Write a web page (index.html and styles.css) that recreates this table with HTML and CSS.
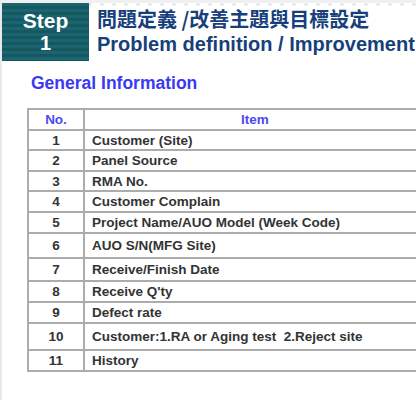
FILE: index.html
```html
<!DOCTYPE html>
<html lang="en">
<head>
    <meta charset="UTF-8">
    <meta name="viewport" content="width=device-width, initial-scale=1.0">
    <title>Step 1 - Problem definition</title>
    <link rel="stylesheet" href="styles.css">
</head>
<body>

<div class="page">
    <div class="header">
        <div class="step-box">
            <span>Step</span>
            <span>1</span>
        </div>
        <div class="titles">
            <div class="title-zh">問題定義 /改善主題與目標設定</div>
            <div class="title-en">Problem definition / Improvement</div>
        </div>
    </div>

    <h2>General Information</h2>

    <table class="info-table">
        <tr class="head">
            <th class="no">No.</th>
            <th>Item</th>
        </tr>
        <tr class="r20"><td class="no">1</td><td>Customer (Site)</td></tr>
        <tr class="r21"><td class="no">2</td><td>Panel Source</td></tr>
        <tr class="r20"><td class="no">3</td><td>RMA No.</td></tr>
        <tr class="r21"><td class="no">4</td><td>Customer Complain</td></tr>
        <tr class="r21"><td class="no">5</td><td>Project Name/AUO Model (Week Code)</td></tr>
        <tr class="r25"><td class="no">6</td><td>AUO S/N(MFG Site)</td></tr>
        <tr class="r23"><td class="no">7</td><td>Receive/Finish Date</td></tr>
        <tr class="r21"><td class="no">8</td><td>Receive Q'ty</td></tr>
        <tr class="r21"><td class="no">9</td><td>Defect rate</td></tr>
        <tr class="r27"><td class="no">10</td><td>Customer:1.RA or Aging test&nbsp; 2.Reject site</td></tr>
        <tr class="r21"><td class="no">11</td><td>History</td></tr>
    </table>
</div>

</body>
</html>
```

FILE: styles.css
```css
body {
    margin: 0;
    background-color: white;
    font-family: Arial, "Liberation Sans", sans-serif;
    overflow: hidden;
}
.page {
    width: 416px;
    height: 400px;
    border-left: 2px solid #e9e9e9;
    border-top: 3px solid #f0f0f0;
    box-sizing: border-box;
    overflow: hidden;
}
.header {
    display: flex;
    align-items: flex-start;
    background-image:
        radial-gradient(circle, rgba(200, 210, 220, 0.5) 1.5px, transparent 2px);
    background-size: 12px 11px;
    background-position: 250px -4px;
    background-repeat: repeat-x;
}
.step-box {
    flex-shrink: 0;
    width: 87px;
    height: 58px;
    display: flex;
    flex-direction: column;
    align-items: center;
    justify-content: center;
    color: white;
    font-weight: bold;
    font-size: 20px;
    line-height: 23px;
    background-color: #175f6c;
    background-image: repeating-linear-gradient(to bottom, #1b6573 0, #1b6573 3px, #15585f 3px, #15585f 6px);
}
.step-box span:first-child {
    font-size: 21px;
}
.titles {
    padding-left: 8px;
    color: #163f7c;
    white-space: nowrap;
}
.title-zh {
    font-family: "Noto Sans CJK TC", Arial, sans-serif;
    font-weight: bold;
    font-size: 20px;
    line-height: 26px;
    margin-top: 3px;
}
.title-en {
    font-weight: bold;
    font-size: 20px;
    line-height: 24px;
}
h2 {
    margin: 11px 0 0 29px;
    font-size: 17.5px;
    line-height: 22px;
    color: #3a3af2;
}
.info-table {
    margin: 14px 0 0 25px;
    width: 400px;
    border-collapse: collapse;
    font-size: 13.5px;
    font-weight: bold;
    color: #333;
}
th, td {
    border: 2px solid #acacac;
    padding: 0 7px;
    text-align: left;
}
th {
    color: #4a4af5;
    text-align: center;
}
td.no, th.no {
    width: 54px;
    text-align: center;
    padding: 0;
}
.head { height: 21px; }
.r20 { height: 20px; }
.r21 { height: 21px; }
.r23 { height: 23px; }
.r25 { height: 25px; }
.r27 { height: 27px; }
```
